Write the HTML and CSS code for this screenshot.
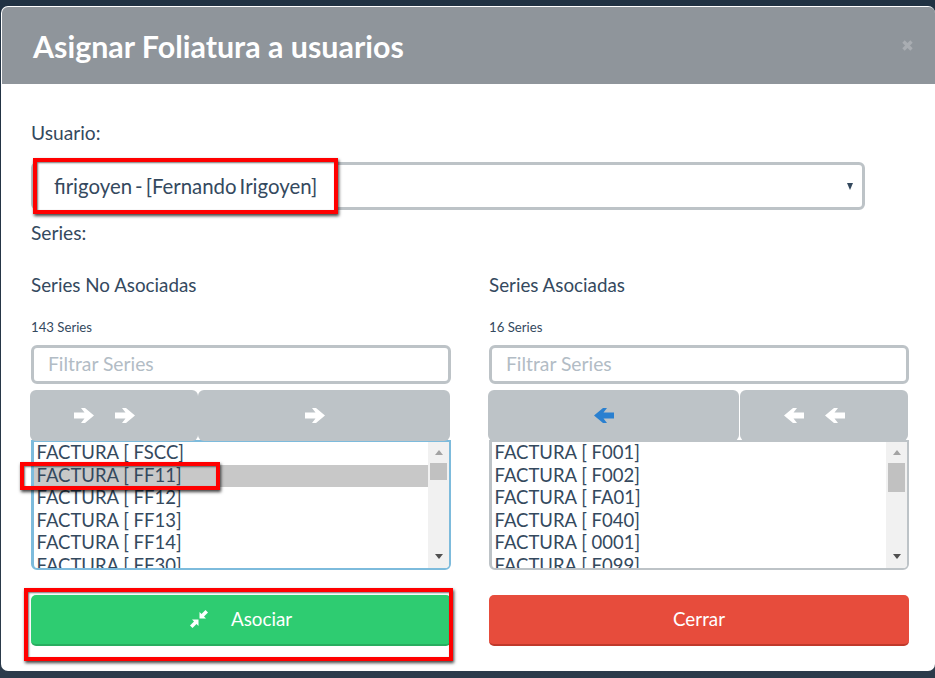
FILE: index.html
```html
<!DOCTYPE html>
<html lang="es">
<head>
<meta charset="utf-8">
<title>Asignar Foliatura a usuarios</title>
<link rel="stylesheet" href="styles.css">
</head>
<body>
<svg class="defs" width="0" height="0" aria-hidden="true">
  <symbol id="arrow-right" viewBox="0 0 20 15"><path d="M0 4.5H10.5L7 0H11L20 7.5 11 15H7L10.5 10.5H0Z"/></symbol>
  <symbol id="arrow-left" viewBox="0 0 20 15"><path d="M20 4.5H9.5L13 0H9L0 7.5 9 15H13L9.5 10.5H20Z"/></symbol>
</svg>
<main class="modal">
  <header class="modal-header">
    <h1 class="modal-title">Asignar Foliatura a usuarios</h1>
    <svg class="close" viewBox="0 0 11 11" aria-label="Cerrar"><path d="M1.5 1.5 9.5 9.5M9.5 1.5 1.5 9.5"/></svg>
  </header>
  <div class="modal-body">
    <div class="label">Usuario:</div>
    <div class="select">
      <span class="select-text">firigoyen - [Fernando Irigoyen]</span>
      <span class="select-caret"></span>
    </div>
    <div class="label label-series">Series:</div>
    <div class="columns">
      <section class="column">
        <div class="label label-col">Series No Asociadas</div>
        <div class="count">143 Series</div>
        <input class="filter" type="text" placeholder="Filtrar Series">
        <div class="btn-group">
          <div class="move move-narrow">
            <svg class="arrow"><use href="#arrow-right"/></svg>
            <svg class="arrow"><use href="#arrow-right"/></svg>
          </div>
          <div class="move move-wide">
            <svg class="arrow"><use href="#arrow-right"/></svg>
          </div>
        </div>
        <div class="list list-active">
          <div class="rows">
            <div class="row">FACTURA [ FSCC]</div>
            <div class="row row-selected">FACTURA [ FF11]</div>
            <div class="row">FACTURA [ FF12]</div>
            <div class="row">FACTURA [ FF13]</div>
            <div class="row">FACTURA [ FF14]</div>
            <div class="row">FACTURA [ FF30]</div>
          </div>
          <div class="scrollbar">
            <span class="tri-up"></span>
            <span class="thumb thumb-small"></span>
            <span class="tri-down"></span>
          </div>
        </div>
        <button class="action action-green" type="button">
          <svg class="compress" viewBox="0 0 18 18"><path d="M0 15.5 4 11.5 2 9.500H8.500V16L6.500 14 2.500 18ZM18 2.500 14 6.500 16 8.500H9.500V2L11.500 4 15.500 0Z"/></svg>
          <span>Asociar</span>
        </button>
      </section>
      <section class="column">
        <div class="label label-col">Series Asociadas</div>
        <div class="count">16 Series</div>
        <input class="filter" type="text" placeholder="Filtrar Series">
        <div class="btn-group">
          <div class="move move-wide move-second">
            <svg class="arrow arrow-blue"><use href="#arrow-left"/></svg>
          </div>
          <div class="move move-narrow">
            <svg class="arrow"><use href="#arrow-left"/></svg>
            <svg class="arrow"><use href="#arrow-left"/></svg>
          </div>
        </div>
        <div class="list">
          <div class="rows">
            <div class="row">FACTURA [ F001]</div>
            <div class="row">FACTURA [ F002]</div>
            <div class="row">FACTURA [ FA01]</div>
            <div class="row">FACTURA [ F040]</div>
            <div class="row">FACTURA [ 0001]</div>
            <div class="row">FACTURA [ F099]</div>
          </div>
          <div class="scrollbar">
            <span class="tri-up"></span>
            <span class="thumb thumb-large"></span>
            <span class="tri-down"></span>
          </div>
        </div>
        <button class="action action-red" type="button"><span>Cerrar</span></button>
      </section>
    </div>
  </div>
</main>
<div class="mark mark-user"></div>
<div class="mark mark-row"></div>
<div class="mark mark-btn"></div>
</body>
</html>
```
FILE: styles.css
```css
* { box-sizing: border-box; }
html, body { margin: 0; padding: 0; }
body {
  width: 935px;
  height: 678px;
  overflow: hidden;
  position: relative;
  padding: 6px 0 0 1px;
  background: linear-gradient(#213243, #2c3b4b);
  font-family: Lato, "Open Sans", sans-serif;
  color: #34495e;
}
.defs { position: absolute; }
.modal {
  width: 934px;
  height: 665px;
  background: #fff;
  border-radius: 7px;
  padding: 1px 0 0 1px;
  display: flex;
  flex-direction: column;
}
.modal-header {
  height: 77px;
  flex: none;
  background: #8f959b;
  border-radius: 6px 6px 0 0;
  display: flex;
  align-items: center;
  justify-content: space-between;
  padding: 0 22px 0 31px;
}
.modal-title { margin: 0; font-size: 30.4px; line-height: 34px; font-weight: 700; color: #fff; }
.close { width: 11px; height: 11px; fill: none; stroke: #a9adb2; stroke-width: 3.4; margin-top: -1px; }
.modal-body { padding: 37px 0 0 29px; }
.label { font-size: 19.2px; line-height: 24px; }
.label-col { font-size: 18.8px; }
.label-series { margin-top: 11px; }
.select {
  width: 834px;
  height: 48px;
  margin-top: 17px;
  border: 3px solid #bdc3c7;
  border-radius: 6px;
  padding: 0 9px 0 20px;
  display: flex;
  align-items: center;
  justify-content: space-between;
}
.select-text { font-size: 20.4px; word-spacing: -2.2px; position: relative; z-index: 2; }
.select-caret { width: 0; height: 0; border-left: 3.500px solid transparent; border-right: 3.500px solid transparent; border-top: 7px solid #34495e; }
.columns { display: grid; grid-template-columns: 420px 420px; column-gap: 38px; margin-top: 28px; }
.column { display: flex; flex-direction: column; }
.count { font-size: 13.2px; line-height: 16px; margin-top: 22px; }
.filter {
  width: 420px;
  height: 39px;
  margin-top: 10px;
  border: 3px solid #bdc3c7;
  border-radius: 6px;
  padding: 0 14px 2px;
  font: 19.3px Lato, sans-serif;
  color: #34495e;
  outline: none;
}
.filter::placeholder { color: #b2bcc5; opacity: 1; }
.btn-group { display: flex; margin: 6px 0 0 -1px; height: 51px; position: relative; z-index: 1; }
.move {
  background: #bdc3c7;
  border-radius: 6px;
  display: flex;
  align-items: center;
  justify-content: center;
  gap: 21px;
  padding-right: 19px;
}
.column:first-child .move-narrow { width: 168px; }
.column:first-child .move-wide { width: 252px; }
.column:last-child .move-narrow { width: 168px; margin-left: 1px; }
.column:last-child .move-wide { width: 251px; }
.arrow { width: 20px; height: 15px; fill: #fff; flex: none; }
.arrow-blue { fill: #2a80d0; }
.list {
  width: 420px;
  height: 130px;
  margin-top: -1px;
  border: 2px solid #bdc3c7;
  border-left-width: 3px;
  border-radius: 0 0 6px 6px;
  background: #fff;
  display: flex;
  overflow: hidden;
}
.list-active { border-color: #7dbbdc; }
.rows { flex: 1; overflow: hidden; min-width: 0; }
.row { height: 22.5px; line-height: 21px; padding-left: 2.500px; font-size: 18.5px; white-space: nowrap; }
.row-selected { background: #c8c8c8; }
.scrollbar {
  width: 21px;
  flex: none;
  background: #f1f1f1;
  display: flex;
  flex-direction: column;
  align-items: center;
  padding-top: 8px;
  position: relative;
}
.tri-up { width: 0; height: 0; border-left: 4.500px solid transparent; border-right: 4.500px solid transparent; border-bottom: 5px solid #a3a3a3; }
.tri-down { width: 0; height: 0; margin-top: auto; margin-bottom: 9px; border-left: 4.500px solid transparent; border-right: 4.500px solid transparent; border-top: 5px solid #505050; }
.thumb { width: 17px; margin-top: 8px; background: #c1c1c1; }
.thumb-small { height: 17px; }
.thumb-large { height: 29px; }
.action {
  width: 420px;
  height: 51px;
  margin-top: 25px;
  border: 0;
  border-bottom: 2px solid;
  border-radius: 5px;
  display: flex;
  align-items: center;
  justify-content: center;
  gap: 23px;
  padding-bottom: 4px;
  font: 18.8px Lato, sans-serif;
  color: #fff;
}
.action-green { background: #2ecc71; border-color: #29ad60; }
.action-red { background: #e74c3c; border-color: #c0392b; }
.compress { width: 18px; height: 18px; fill: #fff; flex: none; margin-top: 2px; }
.mark {
  position: absolute;
  border: 4px solid #f00;
  box-shadow: 1px 2px 3px rgba(0, 0, 0, .75), inset 1px 1px 2px rgba(0, 0, 0, .55);
}
.mark-user { left: 33px; top: 158px; width: 305px; height: 56px; background: #fff; z-index: 1; }
.mark-row { left: 20px; top: 462px; width: 200px; height: 28px; z-index: 3; }
.mark-btn { left: 24px; top: 588px; width: 429px; height: 73px; z-index: 3; }
```
